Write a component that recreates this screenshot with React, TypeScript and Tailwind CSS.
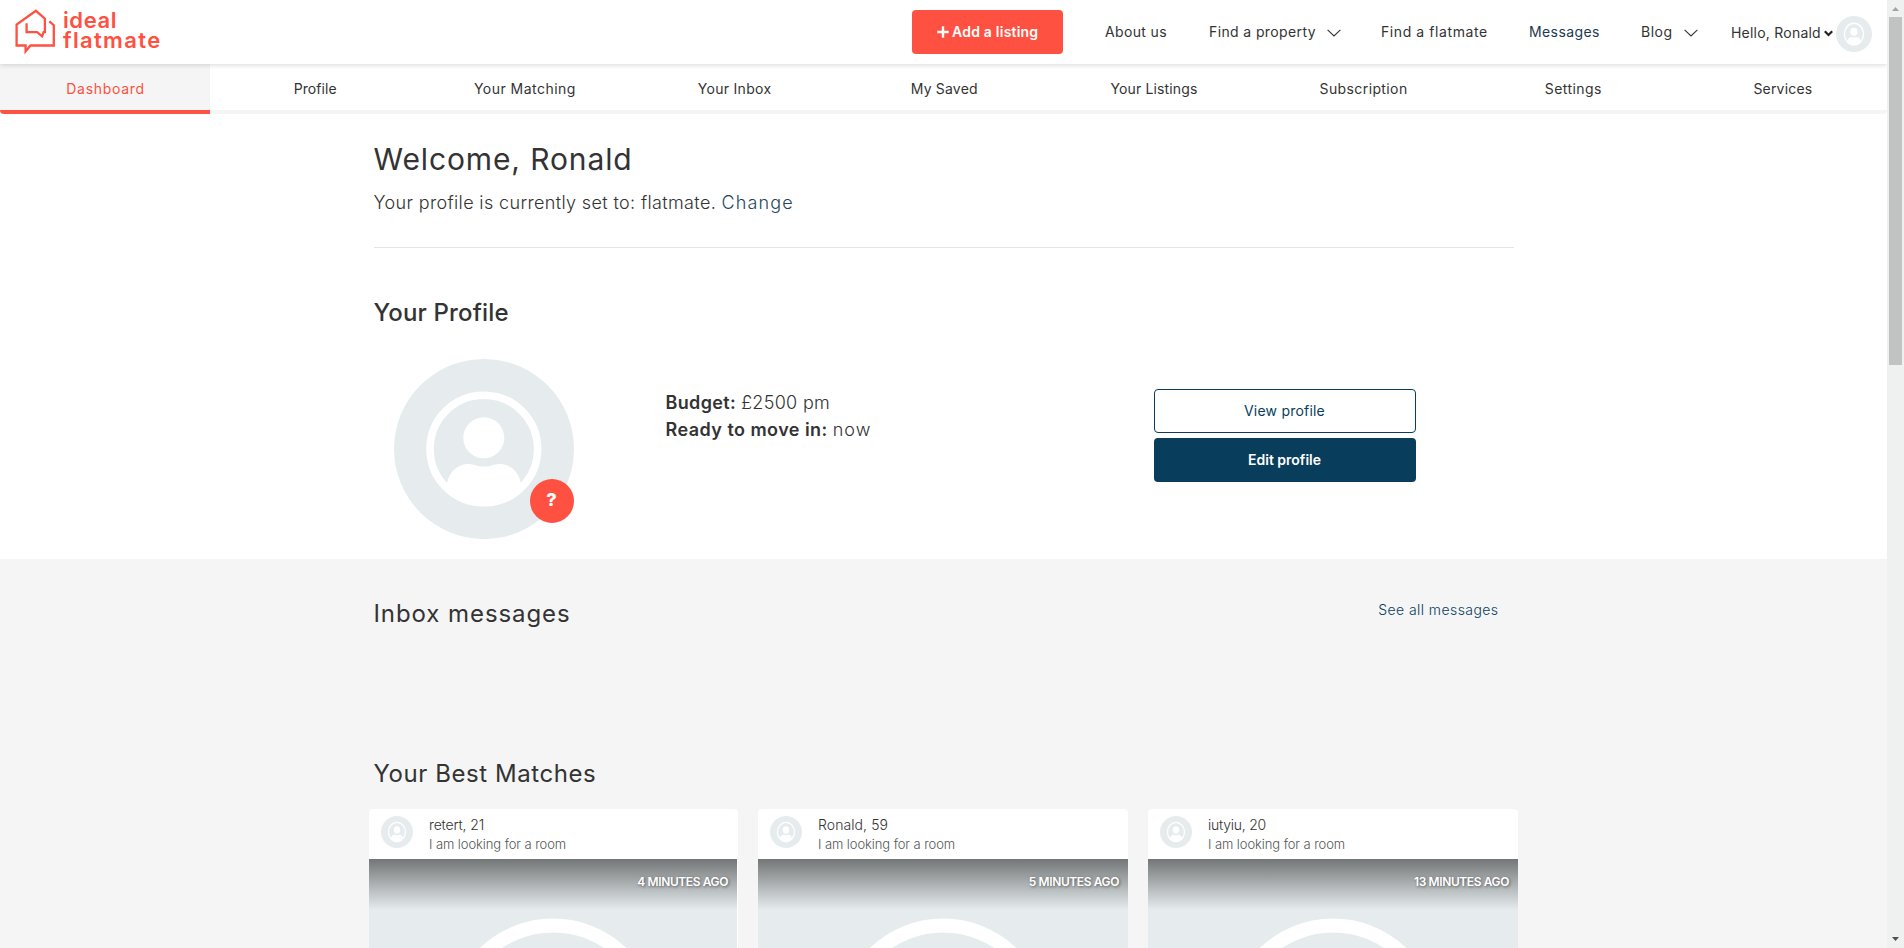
const tabs = [
  { label: "Dashboard", cls: "tracking-[0.7px] text-[#fe5141]" },
  { label: "Profile", cls: "tracking-[0.07px]" },
  { label: "Your Matching", cls: "tracking-[0.48px]" },
  { label: "Your Inbox", cls: "tracking-[0.29px]" },
  { label: "My Saved", cls: "tracking-[0.19px]" },
  { label: "Your Listings", cls: "tracking-[0.14px]" },
  { label: "Subscription", cls: "tracking-[0.39px]" },
  { label: "Settings", cls: "tracking-[0.42px]" },
  { label: "Services", cls: "tracking-[0.2px]" },
];

const matches = [
  { name: "retert, 21", nameCls: "tracking-[-0.15px]", time: "4 MINUTES AGO", imgCls: "mr-px" },
  { name: "Ronald, 59", nameCls: "tracking-[0.08px]", time: "5 MINUTES AGO", imgCls: "" },
  { name: "iutyiu, 20", nameCls: "tracking-[-0.24px]", time: "13 MINUTES AGO", imgCls: "" },
];

function Person({ className, narrow = false }: { className: string; narrow?: boolean }) {
  return (
    <svg viewBox="0 0 180 180" className={className}>
      <rect width="180" height="180" fill="#e6ecee" />
      <g transform={narrow ? "translate(90 90) scale(.89 1) translate(-90 -90)" : undefined}>
        <circle cx="89.8" cy="90" r="53.8" fill="none" stroke="#fff" strokeWidth="7.6" />
        <circle cx="89.8" cy="78.8" r="20.5" fill="#fff" />
        <path
          d="M53 124C55 113 64 105 74 105C80 105 83 107.6 90 107.6C97 107.6 100 105 106 105C116 105 125 113 126.600 124L130 130A56.6 56.6 0 0 1 49.800 130Z"
          fill="#fff"
        />
      </g>
    </svg>
  );
}

function Chevron() {
  return (
    <svg viewBox="0 0 14 8" className="mt-0.5 h-2 w-3.5" fill="none" stroke="#333" strokeWidth="1.1">
      <path d="M.6 .8L7 7L13.400 .8" />
    </svg>
  );
}

function Logo() {
  return (
    <a className="flex text-[#fe5141]">
      <svg viewBox="0 0 44 48" className="h-12 w-11" fill="none" stroke="currentColor" strokeWidth="2.3">
        <path d="M36.300 13.300L40.800 17.200V37.500H17.500L12.600 43.300V37.500H3.600V16.500L22.900 2.800L31.900 10.700V24.200H30.600L29.100 28.300L24.100 24.200H13.600V15.300" />
      </svg>
      <span className="ml-1.5 flex flex-col pt-0.5 text-[22px] leading-[20px] font-semibold">
        <span className="tracking-[0.6px]">ideal</span>
        <span className="tracking-[1.35px]">flatmate</span>
      </span>
    </a>
  );
}

function Header() {
  return (
    <header className="relative z-10 flex h-16 shrink-0 bg-white pr-[15px] pl-[13px] shadow-[0_1px_5px_rgba(0,0,0,0.16)]">
      <div className="pt-2">
        <Logo />
      </div>
      <nav className="ml-auto flex h-16 items-center text-sm leading-5 whitespace-nowrap text-[#333]">
        <a className="flex h-11 w-[151px] items-center rounded bg-[#fe5141] pl-[25px] font-semibold text-white">
          <svg viewBox="0 0 12 12" className="mr-[3px] size-3" fill="none" stroke="currentColor" strokeWidth="2.4">
            <path d="M6 .3V11.700M.3 6H11.700" />
          </svg>
          <span className="tracking-[0.22px]">Add a listing</span>
        </a>
        <a className="ml-[42px] w-[104px] tracking-[0.35px]">About us</a>
        <a className="flex w-[172px] items-center">
          <span className="w-[118px] tracking-[0.38px]">Find a property</span>
          <Chevron />
        </a>
        <a className="w-[148px] tracking-[0.58px]">Find a flatmate</a>
        <a className="w-[112px] tracking-[0.4px] text-[#1b3a4e]">Messages</a>
        <a className="flex w-[90px] items-center">
          <span className="w-[43px] tracking-[0.5px]">Blog</span>
          <Chevron />
        </a>
        <a className="flex items-center pt-0.5">
          <span className="w-[93px] tracking-[0.22px]">Hello, Ronald</span>
          <svg viewBox="0 0 9 7" className="mr-[3px] h-[7px] w-[9px]" fill="none" stroke="#222" strokeWidth="2.2">
            <path d="M.8 1.300L4.500 5L8.200 1.300" />
          </svg>
          <Person narrow className="mt-0.5 size-9 rounded-full" />
        </a>
      </nav>
    </header>
  );
}

function Tabs() {
  return (
    <nav className="grid h-[50px] shrink-0 grid-cols-9 overflow-hidden rounded-b bg-white text-center text-sm leading-[50px] text-[#333]">
      {tabs.map((t, i) => (
        <a
          key={t.label}
          className={`h-[50px] border-b-4 pl-[1.5px] ${i === 0 ? "border-[#fe5141] bg-[#f5f5f5]" : "border-[#f5f5f5]"} ${t.cls}`}
        >
          {t.label}
        </a>
      ))}
    </nav>
  );
}

function Profile() {
  return (
    <section className="mx-auto flex h-[445px] w-[1140px] shrink-0 flex-col pt-[25px] text-[#333]">
      <h1 className="text-[30px] leading-10 tracking-[0.88px]">Welcome, Ronald</h1>
      <p className="mt-[9px] text-lg leading-[30px] font-light tracking-[0.36px]">
        Your profile is currently set to: flatmate. <a className="tracking-[1.15px] text-[#1f4560]">Change</a>
      </p>
      <hr className="mt-[29px] border-[#e5e5e5]" />
      <h2 className="mt-[50px] text-2xl leading-[30px] font-medium tracking-[0.16px]">Your Profile</h2>
      <div className="mt-[31px] flex pl-5">
        <div className="relative size-[180px]">
          <Person className="size-[180px] rounded-full" />
          <span className="absolute right-0 bottom-4 flex size-11 items-center justify-center rounded-full bg-[#fe5141] pb-0.5 text-lg font-extrabold text-white">
            ?
          </span>
        </div>
        <div className="w-[489px] pt-[30px] pl-[92px] text-lg leading-[27px] font-light">
          <p>
            <b className="font-semibold tracking-[0.35px]">Budget:</b> <span className="tracking-[0.3px]">£2500 pm</span>
          </p>
          <p>
            <b className="font-semibold tracking-[0.45px]">Ready to move in:</b> <span className="tracking-[1px]">now</span>
          </p>
        </div>
        <div className="ml-[91px] flex w-[262px] flex-col gap-[5px] pt-[30px] text-center text-sm">
          <a className="h-11 rounded border border-[#083d5b] leading-[42px] tracking-[0.21px] text-[#083d5b]">View profile</a>
          <a className="h-11 rounded bg-[#083d5b] leading-[44px] font-semibold text-white">Edit profile</a>
        </div>
      </div>
    </section>
  );
}

function MatchCard({ m }: { m: (typeof matches)[number] }) {
  return (
    <article className="overflow-hidden rounded bg-white">
      <div className="flex h-[50px] pt-[7px] pl-3">
        <Person narrow className="size-8 rounded-full" />
        <div className="-mt-px ml-4 font-light">
          <p className={`text-sm leading-[19px] text-[#333] ${m.nameCls}`}>{m.name}</p>
          <p className="text-[13px] leading-[21px] tracking-[-0.08px] text-[#555]">I am looking for a room</p>
        </div>
      </div>
      <div className={`relative flex h-[331px] justify-center bg-[#e6ecee] ${m.imgCls}`}>
        <Person className="size-[331px]" />
        <div className="absolute inset-x-0 top-0 h-[51px] bg-linear-to-b from-black/50 to-transparent pt-[13px] pr-[9px] text-right text-xs leading-5 font-semibold tracking-[-0.4px] text-white [text-shadow:1px_1px_3px_rgba(0,0,0,0.5)]">
          {m.time}
        </div>
      </div>
    </article>
  );
}

function Scrollbar() {
  return (
    <div className="flex h-full w-[17px] flex-col items-center bg-[#eff1f0]">
      <svg viewBox="0 0 17 17" className="size-[17px]">
        <path d="M5 11H12L8.500 7Z" fill="#a3a3a3" />
      </svg>
      <div className="h-[348px] w-[13px] bg-[#c1c3c2]" />
      <svg viewBox="0 0 17 17" className="mt-auto size-[17px]">
        <path d="M5 6H12L8.500 10Z" fill="#505050" />
      </svg>
    </div>
  );
}

export default function App() {
  return (
    <div className="flex h-[948px] w-[1904px] overflow-hidden bg-white font-['Inter',sans-serif]">
      <div className="flex h-full w-[1887px] flex-col overflow-hidden">
        <Header />
        <Tabs />
        <Profile />
        <main className="h-[389px] shrink-0 overflow-hidden bg-[#f5f5f5] pt-10 text-[#333]">
          <div className="mx-auto flex w-[1140px] justify-between pr-[15px]">
            <h2 className="text-2xl leading-[30px] tracking-[0.92px]">Inbox messages</h2>
            <a className="-mt-px text-sm leading-6 font-light tracking-[0.43px] text-[#083d5b]">See all messages</a>
          </div>
          <h2 className="mx-auto mt-[130px] w-[1140px] text-2xl leading-[30px] tracking-[0.57px]">Your Best Matches</h2>
          <div className="mx-auto mt-5 grid w-[1149px] grid-cols-[369px_370px_370px] gap-5">
            {matches.map((m) => (
              <MatchCard key={m.name} m={m} />
            ))}
          </div>
        </main>
      </div>
      <Scrollbar />
    </div>
  );
}
